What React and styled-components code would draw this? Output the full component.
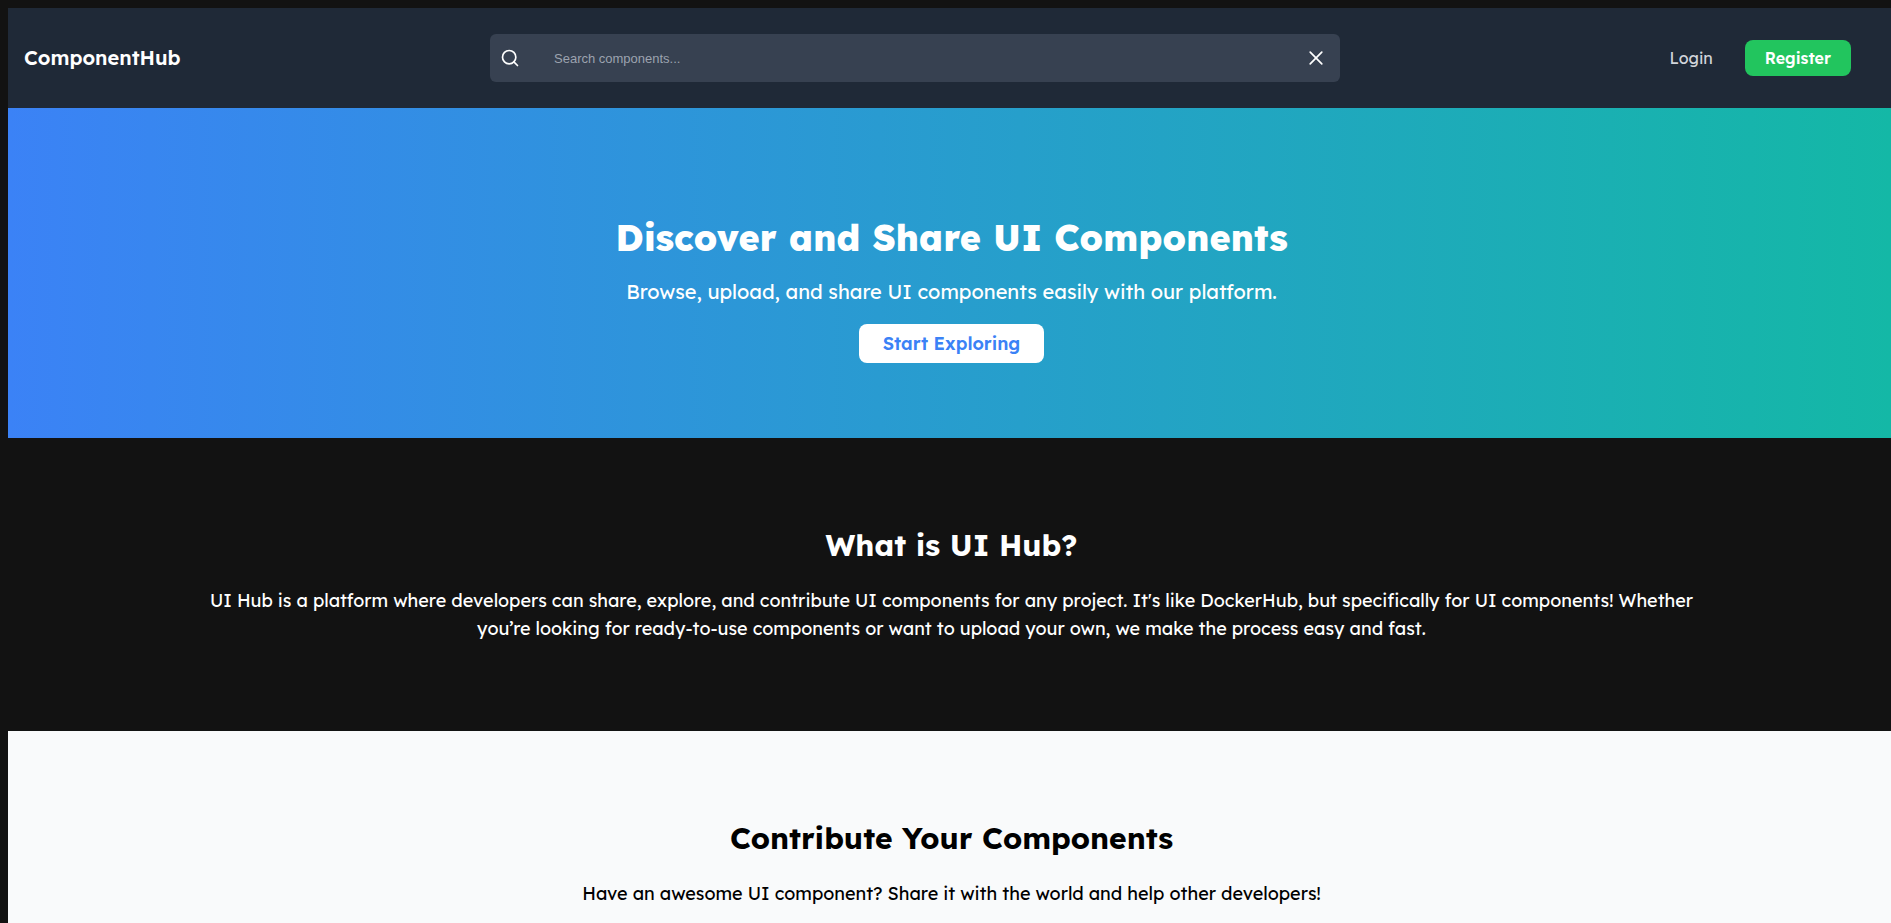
import React, { useState } from "react";
import styled, { createGlobalStyle } from "styled-components";
import { Search } from "lucide-react";

const GlobalStyle = createGlobalStyle`
  *, *::before, *::after { box-sizing: border-box; }
  html { background: #121212; }
  body {
    margin: 8px 0 0 8px;
    background: #121212;
    color: #fff;
    font-family: Lexend, Inter, sans-serif;
    font-size: 16px;
  }
  h1, h2, p { margin: 0; }
`;

const Header = styled.header`
  display: flex;
  align-items: center;
  justify-content: space-between;
  gap: 24px;
  height: 100px;
  padding: 0 40px 0 16px;
  background: #1f2937;
`;

const Logo = styled.a`
  color: #fff;
  font-size: 20px;
  font-weight: 600;
  line-height: 28px;
  text-decoration: none;
`;

const SearchBar = styled.form`
  display: flex;
  flex: 0 1 850px;
  align-items: center;
  height: 48px;
  padding: 0 14px 0 10px;
  border-radius: 6px;
  background: #374151;
`;

const IconButton = styled.button`
  display: flex;
  padding: 0;
  border: 0;
  background: none;
  color: #fff;
  cursor: pointer;
`;

const SearchInput = styled.input`
  flex: 1;
  min-width: 0;
  height: 100%;
  padding: 0 34px;
  border: 0;
  outline: 0;
  background: none;
  color: #fff;
  font-family: Arial, "Liberation Sans", sans-serif;
  font-size: 13px;

  &::placeholder { color: #9ca3af; opacity: 1; }
`;

const Nav = styled.nav`
  display: flex;
  align-items: center;
  gap: 12px;
`;

const NavLink = styled.a`
  padding: 8px 20px;
  border-radius: 8px;
  background: ${(p) => (p.$primary ? "#22c55e" : "none")};
  color: ${(p) => (p.$primary ? "#fff" : "#d1d5db")};
  font-size: 16px;
  font-weight: ${(p) => (p.$primary ? 600 : 400)};
  line-height: 20px;
  text-decoration: none;
`;

const Hero = styled.section`
  display: flex;
  flex-direction: column;
  align-items: center;
  padding: 110px 24px 75px 28px;
  background: linear-gradient(to right, #3b82f6, #14b8a6);
  text-align: center;
`;

const HeroTitle = styled.h1`
  && { margin-bottom: 20px; }
  font-size: 36px;
  font-weight: 800;
  line-height: 40px;
`;

const HeroText = styled.p`
  && { margin-bottom: 18px; }
  font-size: 20px;
  line-height: 28px;
`;

const HeroButton = styled.button`
  height: 39px;
  padding: 0 24px;
  border: 0;
  border-radius: 8px;
  background: #fff;
  color: #3b82f6;
  font-family: inherit;
  font-size: 18px;
  font-weight: 600;
  cursor: pointer;
`;

const InfoSection = styled.section`
  display: flex;
  flex-direction: column;
  align-items: center;
  gap: 24px;
  padding: 89px 10% 88px calc(10% + 4px);
  background: ${(p) => (p.$light ? "#f9fafb" : "#121212")};
  color: ${(p) => (p.$light ? "#000" : "#fff")};
  text-align: center;
`;

const SectionTitle = styled.h2`
  font-size: 30px;
  font-weight: 700;
  line-height: 36px;
`;

const SectionText = styled.p`
  font-size: 18px;
  line-height: 28px;
`;

function CloseIcon() {
  return (
    <svg width="20" height="20" viewBox="0 0 20 20" fill="none" stroke="currentColor" strokeWidth="1.7" strokeLinecap="round" aria-hidden="true">
      <path d="M4.2 4.2 15.8 15.8M15.8 4.2 4.2 15.8" />
    </svg>
  );
}

export default function App() {
  const [query, setQuery] = useState("");

  return (
    <>
      <GlobalStyle />
      <Header>
        <Logo href="#">ComponentHub</Logo>
        <SearchBar role="search" onSubmit={(e) => e.preventDefault()}>
          <IconButton type="submit" aria-label="Search">
            <Search size={20} />
          </IconButton>
          <SearchInput
            type="text"
            aria-label="Search components"
            placeholder="Search components..."
            value={query}
            onChange={(e) => setQuery(e.target.value)}
          />
          <IconButton type="button" aria-label="Clear search" onClick={() => setQuery("")}>
            <CloseIcon />
          </IconButton>
        </SearchBar>
        <Nav>
          <NavLink href="#login">Login</NavLink>
          <NavLink href="#register" $primary>Register</NavLink>
        </Nav>
      </Header>
      <main>
        <Hero>
          <HeroTitle>Discover and Share UI Components</HeroTitle>
          <HeroText>Browse, upload, and share UI components easily with our platform.</HeroText>
          <HeroButton type="button">Start Exploring</HeroButton>
        </Hero>
        <InfoSection>
          <SectionTitle>What is UI Hub?</SectionTitle>
          <SectionText>
            UI Hub is a platform where developers can share, explore, and contribute UI components for any project. It's
            like DockerHub, but specifically for UI components! Whether you’re looking for ready-to-use components or
            want to upload your own, we make the process easy and fast.
          </SectionText>
        </InfoSection>
        <InfoSection $light>
          <SectionTitle>Contribute Your Components</SectionTitle>
          <SectionText>Have an awesome UI component? Share it with the world and help other developers!</SectionText>
        </InfoSection>
      </main>
    </>
  );
}
